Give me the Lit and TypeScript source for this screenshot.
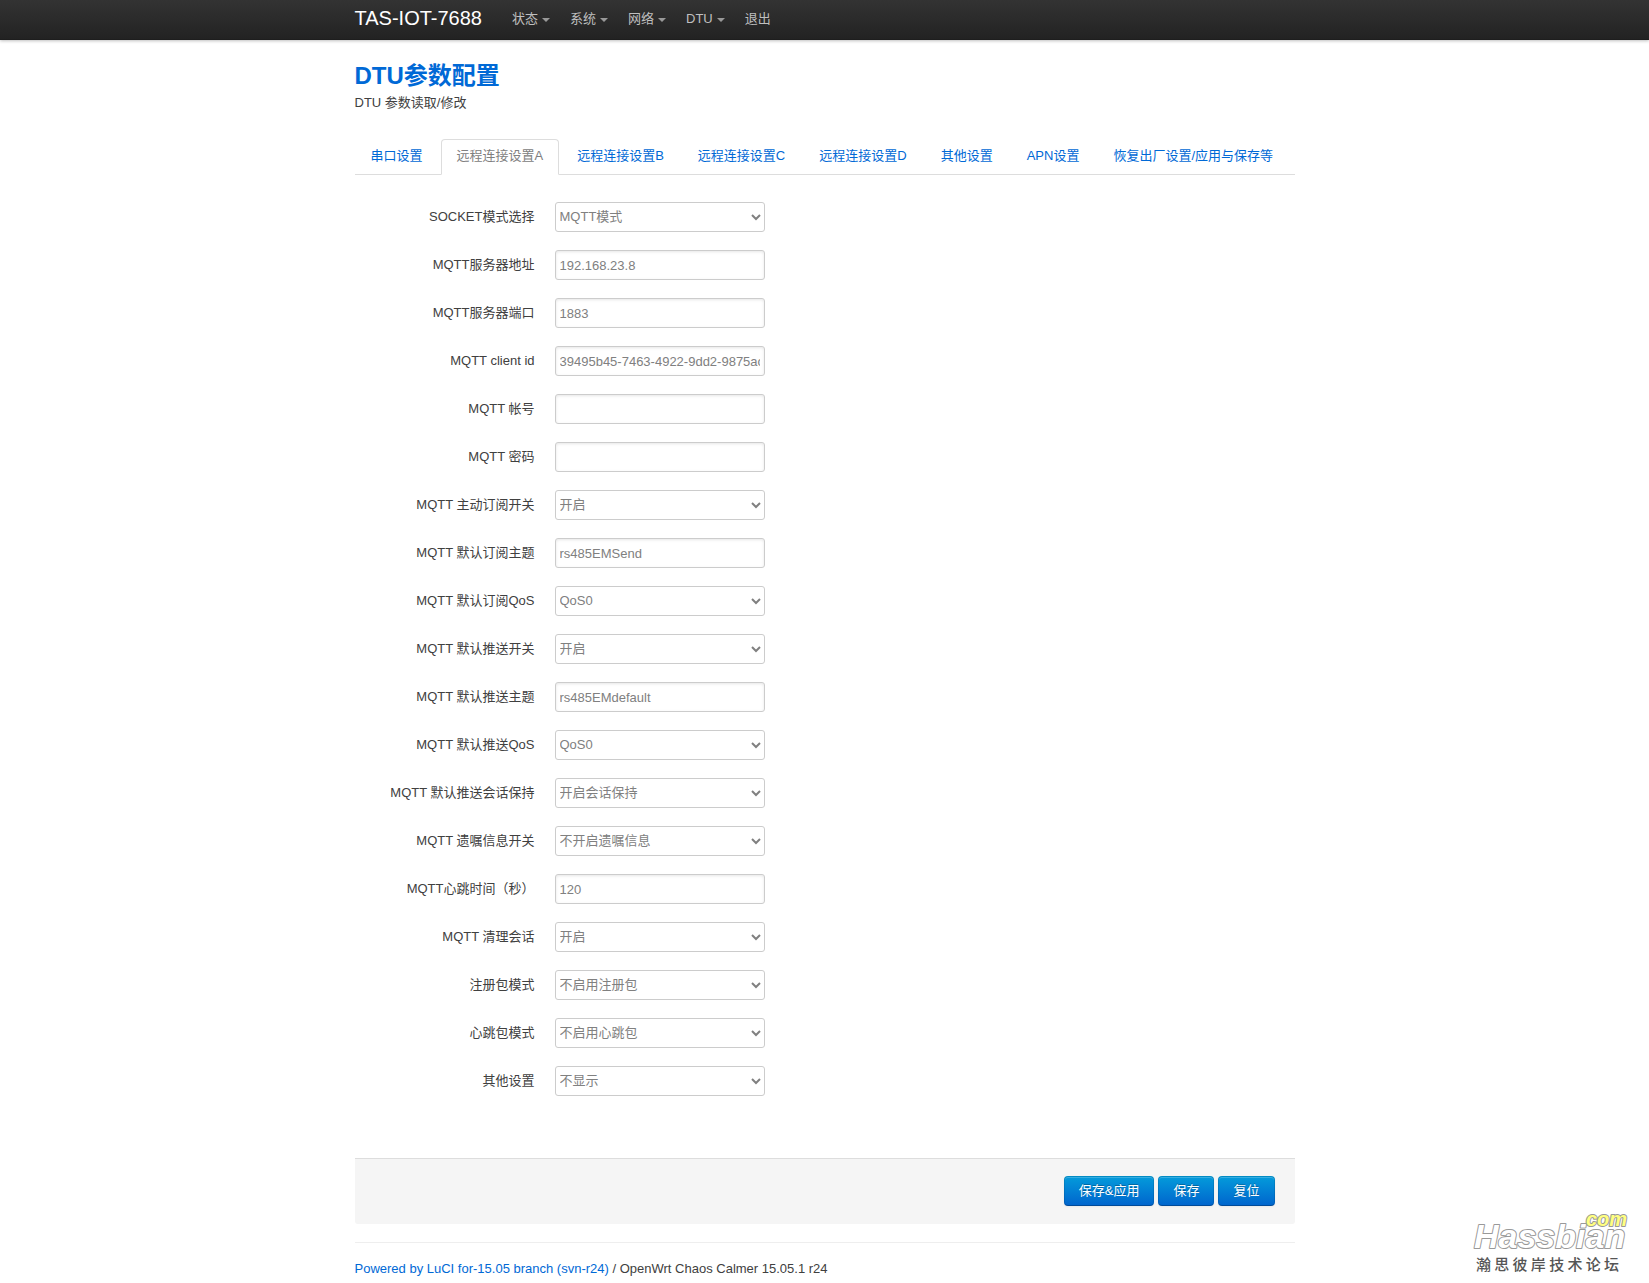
import { LitElement, html, css } from "lit";
import { customElement, state } from "lit/decorators.js";

interface Field {
  id: string;
  label: string;
  value: string;
  kind: "text" | "password" | "select";
}

const MENU = [
  { label: "状态", dropdown: true },
  { label: "系统", dropdown: true },
  { label: "网络", dropdown: true },
  { label: "DTU", dropdown: true },
  { label: "退出", dropdown: false },
];

const TABS = [
  "串口设置",
  "远程连接设置A",
  "远程连接设置B",
  "远程连接设置C",
  "远程连接设置D",
  "其他设置",
  "APN设置",
  "恢复出厂设置/应用与保存等",
];

const FIELDS: Field[] = [
  { id: "socket-mode", label: "SOCKET模式选择", value: "MQTT模式", kind: "select" },
  { id: "host", label: "MQTT服务器地址", value: "192.168.23.8", kind: "text" },
  { id: "port", label: "MQTT服务器端口", value: "1883", kind: "text" },
  { id: "client-id", label: "MQTT client id", value: "39495b45-7463-4922-9dd2-9875ac", kind: "text" },
  { id: "user", label: "MQTT 帐号", value: "", kind: "text" },
  { id: "pass", label: "MQTT 密码", value: "", kind: "password" },
  { id: "sub-on", label: "MQTT 主动订阅开关", value: "开启", kind: "select" },
  { id: "sub-topic", label: "MQTT 默认订阅主题", value: "rs485EMSend", kind: "text" },
  { id: "sub-qos", label: "MQTT 默认订阅QoS", value: "QoS0", kind: "select" },
  { id: "pub-on", label: "MQTT 默认推送开关", value: "开启", kind: "select" },
  { id: "pub-topic", label: "MQTT 默认推送主题", value: "rs485EMdefault", kind: "text" },
  { id: "pub-qos", label: "MQTT 默认推送QoS", value: "QoS0", kind: "select" },
  { id: "pub-retain", label: "MQTT 默认推送会话保持", value: "开启会话保持", kind: "select" },
  { id: "will", label: "MQTT 遗嘱信息开关", value: "不开启遗嘱信息", kind: "select" },
  { id: "keepalive", label: "MQTT心跳时间（秒）", value: "120", kind: "text" },
  { id: "clean", label: "MQTT 清理会话", value: "开启", kind: "select" },
  { id: "register", label: "注册包模式", value: "不启用注册包", kind: "select" },
  { id: "heartbeat", label: "心跳包模式", value: "不启用心跳包", kind: "select" },
  { id: "other", label: "其他设置", value: "不显示", kind: "select" },
];

@customElement("app-root")
export class AppRoot extends LitElement {
  static styles = css`
    :host {
      display: block;
      position: relative;
      box-sizing: border-box;
      min-height: 100vh;
      background: #fff;
      color: #404040;
      font: 13px/18px "Liberation Sans", Arial, "Noto Sans CJK SC", sans-serif;
    }
    * {
      box-sizing: border-box;
    }
    a {
      color: #0069d6;
      text-decoration: none;
    }
    .container {
      width: 100%;
      max-width: 940px;
      margin: 0 auto;
    }
    .topbar {
      background: linear-gradient(#333, #222);
      box-shadow: 0 1px 3px rgba(0, 0, 0, 0.25), inset 0 -1px 0 rgba(0, 0, 0, 0.1);
    }
    .bar {
      display: flex;
      height: 40px;
      align-items: center;
      gap: 20px;
    }
    .brand {
      color: #fff;
      font-size: 20px;
      line-height: 20px;
      padding-bottom: 4px;
    }
    .menu {
      display: flex;
      list-style: none;
      margin: 0;
      padding: 0;
    }
    .menu a {
      display: flex;
      align-items: center;
      gap: 4px;
      padding: 0 10px 2px;
      color: #bfbfbf;
    }
    .caret {
      border: 4px solid transparent;
      border-top-color: #999;
      border-bottom: 0;
      margin-top: 2px;
    }
    h2 {
      margin: 0;
      padding-top: 18px;
      font-size: 24px;
      line-height: 36px;
      color: #0069d6;
    }
    .intro {
      margin: 0 0 27px;
    }
    .tabs {
      display: flex;
      gap: 2px;
      list-style: none;
      margin: 0 0 27px;
      padding: 0;
      border-bottom: 1px solid #ddd;
    }
    .tab {
      display: block;
      margin-bottom: -1px;
      padding: 0 15px 2px;
      border: 1px solid transparent;
      border-radius: 4px 4px 0 0;
      line-height: 32px;
    }
    .tab.active {
      background: #fff;
      border-color: #ddd;
      border-bottom-color: #fff;
      color: #808080;
    }
    .fields {
      display: grid;
      gap: 18px;
      margin-bottom: 62px;
    }
    .field {
      display: grid;
      grid-template-columns: 180px 210px;
      column-gap: 20px;
    }
    .field label {
      text-align: right;
      line-height: 30px;
    }
    .control {
      width: 100%;
      height: 30px;
      margin: 0;
      padding: 4px;
      border: 1px solid #ccc;
      border-radius: 3px;
      background: #fff;
      color: #808080;
      font: inherit;
    }
    input.control {
      box-shadow: inset 0 1px 3px rgba(0, 0, 0, 0.1);
    }
    select.control {
      padding: 0 1px 1px 0;
    }
    .actions {
      display: flex;
      justify-content: flex-end;
      gap: 4px;
      padding: 17px 20px 18px;
      background: #f5f5f5;
      border-top: 1px solid #ddd;
      border-radius: 0 0 3px 3px;
    }
    .btn {
      height: 30px;
      padding: 0 14px;
      border: 1px solid;
      border-color: rgba(0, 0, 0, 0.1) rgba(0, 0, 0, 0.1) rgba(0, 0, 0, 0.25);
      border-radius: 4px;
      background: linear-gradient(#049cdb, #0064cd) border-box;
      box-shadow: inset 0 1px 0 rgba(255, 255, 255, 0.2), 0 1px 2px rgba(0, 0, 0, 0.05);
      color: #fff;
      font: inherit;
      text-shadow: 0 -1px 0 rgba(0, 0, 0, 0.25);
      cursor: pointer;
    }
    footer {
      margin-top: 18px;
      padding-top: 17px;
      border-top: 1px solid #eee;
    }
    .watermark {
      position: absolute;
      right: 16px;
      bottom: 8px;
      width: 164px;
    }
    .logo {
      display: block;
      width: 164px;
      height: 44px;
      overflow: visible;
      font-family: "Liberation Sans", Arial, sans-serif;
      font-weight: bold;
      font-style: italic;
      stroke: #999;
      stroke-width: 2;
      stroke-linejoin: round;
      paint-order: stroke;
    }
    .logo-name {
      font-size: 34px;
      fill: #fff;
    }
    .logo-com {
      font-size: 20px;
      fill: #ffff80;
    }
    .forum {
      display: flex;
      justify-content: space-between;
      padding: 0 14px 0 7px;
      font-size: 15px;
      line-height: 20px;
      font-weight: 500;
      color: #555;
    }
  `;

  @state() private activeTab = 1;

  private selectTab(event: Event, index: number) {
    event.preventDefault();
    this.activeTab = index;
  }

  private renderControl(field: Field) {
    if (field.kind === "select") {
      return html`<select class="control" id=${field.id}>
        <option>${field.value}</option>
      </select>`;
    }
    return html`<input class="control" id=${field.id} type=${field.kind} .value=${field.value} />`;
  }

  render() {
    return html`
      <header class="topbar">
        <div class="container bar">
          <a class="brand" href="#">TAS-IOT-7688</a>
          <nav>
            <ul class="menu">
              ${MENU.map(
                (m) => html`<li>
                  <a href="#">${m.label}${m.dropdown ? html`<span class="caret"></span>` : ""}</a>
                </li>`
              )}
            </ul>
          </nav>
        </div>
      </header>
      <main class="container">
        <h2>DTU参数配置</h2>
        <p class="intro">DTU 参数读取/修改</p>
        <ul class="tabs">
          ${TABS.map(
            (t, i) => html`<li>
              <a
                class="tab ${i === this.activeTab ? "active" : ""}"
                href="#"
                @click=${(e: Event) => this.selectTab(e, i)}
                >${t}</a
              >
            </li>`
          )}
        </ul>
        <form @submit=${(e: Event) => e.preventDefault()}>
          <div class="fields">
            ${FIELDS.map(
              (f) => html`<div class="field">
                <label for=${f.id}>${f.label}</label>
                ${this.renderControl(f)}
              </div>`
            )}
          </div>
          <div class="actions">
            <button class="btn" type="submit">保存&amp;应用</button>
            <button class="btn" type="submit">保存</button>
            <button class="btn" type="reset">复位</button>
          </div>
        </form>
        <footer>
          <a href="#">Powered by LuCI for-15.05 branch (svn-r24)</a> / OpenWrt Chaos Calmer 15.05.1 r24
        </footer>
      </main>
      <div class="watermark">
        <svg class="logo" viewBox="0 0 164 44">
          <text class="logo-name" x="5" y="37">Hassbian</text>
          <text class="logo-com" x="117" y="15">com</text>
        </svg>
        <div class="forum">${[..."瀚思彼岸技术论坛"].map((c) => html`<span>${c}</span>`)}</div>
      </div>
    `;
  }
}
